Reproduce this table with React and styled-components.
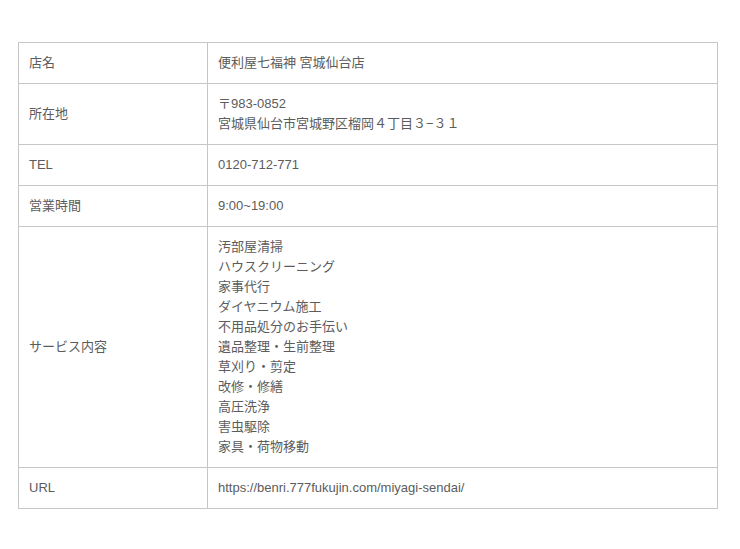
import React from 'react'
import styled, { createGlobalStyle } from 'styled-components'

const Global = createGlobalStyle`
  body {
    margin: 0;
    background: #fff;
    font-family: "Liberation Sans", Arial, "Noto Sans CJK JP", sans-serif;
  }
`

const Page = styled.div`
  padding: 42px 0 0 18px;
`

const Table = styled.table`
  width: 700px;
  border-collapse: collapse;
  font-size: 13px;
  line-height: 20px;
  color: #5c5c5c;
`

const Cell = styled.td`
  border: 1px solid #c6c6c6;
  padding: 10px;
  vertical-align: middle;
  text-align: left;
  width: ${(p) => (p.head ? '168px' : 'auto')};
`

const Line = styled.div``

const rows = [
  ['店名', ['便利屋七福神 宮城仙台店']],
  ['所在地', ['〒983-0852', '宮城県仙台市宮城野区榴岡４丁目３−３１']],
  ['TEL', ['0120-712-771']],
  ['営業時間', ['9:00~19:00']],
  ['サービス内容', [
    '汚部屋清掃',
    'ハウスクリーニング',
    '家事代行',
    'ダイヤニウム施工',
    '不用品処分のお手伝い',
    '遺品整理・生前整理',
    '草刈り・剪定',
    '改修・修繕',
    '高圧洗浄',
    '害虫駆除',
    '家具・荷物移動',
  ]],
  ['URL', ['https://benri.777fukujin.com/miyagi-sendai/']],
]

export default function App() {
  return (
    <Page>
      <Global />
      <Table>
        <tbody>
          {rows.map(([label, lines]) => (
            <tr key={label}>
              <Cell head>{label}</Cell>
              <Cell>
                {lines.map((l) => (
                  <Line key={l}>{l}</Line>
                ))}
              </Cell>
            </tr>
          ))}
        </tbody>
      </Table>
    </Page>
  )
}
